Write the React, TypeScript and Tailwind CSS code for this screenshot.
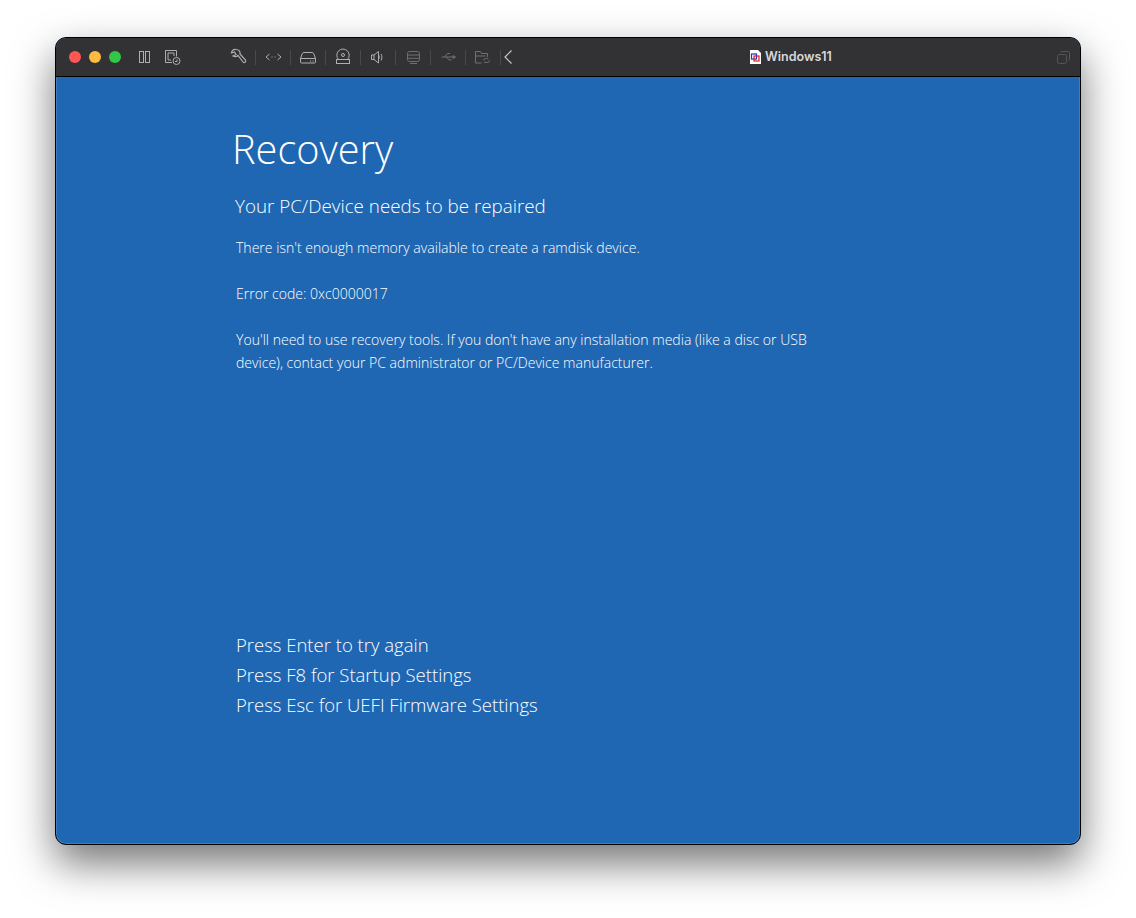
import type { ReactNode } from "react";

function Tool({ w, children, dim }: { w: number; children: ReactNode; dim?: boolean }) {
  return (
    <div className="flex w-[34px] justify-center">
      <svg
        width={w}
        height="18"
        viewBox={`0 0 ${w} 18`}
        fill="none"
        stroke="currentColor"
        strokeWidth="1"
        className={dim ? "text-[#707072]" : "text-[#aeaeb0]"}
      >
        {children}
      </svg>
    </div>
  );
}

function Sep() {
  return <div className="h-[15px] w-px bg-[#49494b]" />;
}

function DocIcon() {
  return (
    <svg width="11" height="14" viewBox="0 0 11 14">
      <path d="M0 0h8l3 3v11H0z" fill="#fff" />
      <rect x="1.500" y="4" width="5" height="5" fill="none" stroke="#2233bb" strokeWidth="1.200" />
      <rect x="4" y="6" width="5" height="5" fill="none" stroke="#d81f26" strokeWidth="1.200" />
    </svg>
  );
}

function TitleBar() {
  return (
    <div className="flex h-[39px] items-center rounded-t-[10px] border-b border-black bg-[#323134] pl-[13px] pr-[10px]">
      <div className="flex gap-2">
        <div className="h-3 w-3 rounded-full bg-[#fc5753]" />
        <div className="h-3 w-3 rounded-full bg-[#fdbc40]" />
        <div className="h-3 w-3 rounded-full bg-[#33c748]" />
      </div>
      <svg width="11" height="18" viewBox="0 0 11 18" fill="none" stroke="#aeaeb0" className="ml-[18px]">
        <rect x=".5" y="3.500" width="4" height="11" />
        <rect x="6.500" y="3.500" width="4" height="11" />
      </svg>
      <svg width="16" height="18" viewBox="0 0 16 18" fill="none" stroke="#aeaeb0" className="ml-[15px]">
        <path d="M7 14.500H.5v-12h11v6" />
        <path d="M3 5h6v3M3 5v7h3" />
        <circle cx="11.500" cy="13" r="3.500" />
        <path d="M12 11.500V13.500H10" />
      </svg>
      <div className="ml-[40px] flex items-center">
        <Tool w={17}>
          <path
            d="M6 1.500C3.500 1 1.500 3 1.500 5L4.500 4 6 6.500 3 8C5 9 7 8.500 8 7.500L13 14C14 15.500 16.500 14 15.500 12L10 6C10.500 3.500 9 1.500 6 1.500Z"
            strokeWidth="1.200"
          />
        </Tool>
        <Sep />
        <Tool w={17}>
          <path d="M4.500 6 1 9l3.500 3M12.500 6 16 9l-3.500 3" />
          <path d="M6.500 9h1M9.500 9h1" />
        </Tool>
        <Sep />
        <Tool w={16}>
          <path d="M4 4.500h8c1 0 1.500.5 1.800 1.300l1.700 4.700v3.500c0 .6-.4 1-1 1h-13c-.6 0-1-.4-1-1v-3.500l1.700-4.700C2.500 5 3 4.500 4 4.500z" />
          <path d="M.5 10.500h15" />
          <path d="M10 13h1.200M12.500 13h1" />
        </Tool>
        <Sep />
        <Tool w={14}>
          <path d="M2.500 11.500a6.200 6.200 0 1 1 9 0" />
          <circle cx="7" cy="7" r="1.500" />
          <rect x=".5" y="11.500" width="13" height="4" />
        </Tool>
        <Sep />
        <Tool w={14}>
          <path d="M.5 7v4.500h2.500L7.500 15V3.500L3 7z" />
          <path d="M3 7v4.500M10 6c1.200 2 1.200 4.500 0 6.500M7.500 7c1 1.300 1 3 0 4.500" />
        </Tool>
        <Sep />
        <Tool w={13} dim>
          <rect x=".5" y="3.500" width="12" height="10" rx="2" />
          <path d="M.5 7h12M.5 10.300h12M3 15.500h7" />
        </Tool>
        <Sep />
        <Tool w={15} dim>
          <path d="M.5 9h13M14.500 9l-2.500-1.500v3zM3.500 9l3-3.500h2.500M5.500 9l2.500 3h2.500" />
        </Tool>
        <Sep />
        <Tool w={16} dim>
          <path d="M6.500 15H.5V3.500h5l1 2h6V9" />
          <path d="M.5 8h10M8 12.500c1-2 3-2.500 5.500-1.500M15 12.500c-1 2-3 2.500-6 1.500" />
        </Tool>
        <Sep />
      </div>
      <svg width="9" height="14" viewBox="0 0 9 14" fill="none" stroke="#c9c9cb" strokeWidth="1.200" className="ml-[3px]">
        <path d="M7.500 .5 1 7l6.500 6.500" />
      </svg>
      <div className="ml-[237px] flex items-center gap-[4px]">
        <DocIcon />
        <span className="font-['Inter',sans-serif] text-[12.500px] font-semibold text-[#d8d8d9]">Windows11</span>
      </div>
      <svg width="13" height="13" viewBox="0 0 13 13" fill="none" stroke="#55555a" className="ml-auto">
        <rect x=".5" y="3.500" width="9" height="9" rx="2" />
        <path d="M3.500 1.500c0-.6.4-1 1-1h6.500c1 0 1.500.5 1.500 1.500v6.500c0 .6-.4 1-1 1" />
      </svg>
    </div>
  );
}

export default function App() {
  return (
    <div className="h-[918px] overflow-hidden bg-white pl-[55px] pt-[37px] font-['Open_Sans',sans-serif] text-white">
      <div className="flex h-[808px] w-[1026px] flex-col rounded-[11px] border border-black bg-[#1f67b3] shadow-[0_18px_42px_rgba(0,0,0,0.55),inset_0_0_0_1px_rgba(255,255,255,0.15)]">
        <TitleBar />
        <main className="flex flex-1 flex-col pl-[180px]">
          <h1 className="-ml-[4px] mt-[44px] text-[39.700px] font-light leading-[56px]">Recovery</h1>
          <h2 className="-ml-px mt-[16px] text-[18.800px] font-[350] leading-[26px]">Your PC/Device needs to be repaired</h2>
          <div className="mt-[17px] w-[590px] text-[14.050px] font-[350] leading-[23px]">
            <p>There isn't enough memory available to create a ramdisk device.</p>
            <p className="mt-[23px]">Error code: 0xc0000017</p>
            <p className="mt-[23px]">
              You'll need to use recovery tools. If you don't have any installation media (like a disc or USB device), contact your PC administrator or PC/Device manufacturer.
            </p>
          </div>
          <div className="mt-[256px] text-[18.500px] font-[350] leading-[30px]">
            <p>Press Enter to try again</p>
            <p>Press F8 for Startup Settings</p>
            <p>Press Esc for UEFI Firmware Settings</p>
          </div>
        </main>
      </div>
    </div>
  );
}
